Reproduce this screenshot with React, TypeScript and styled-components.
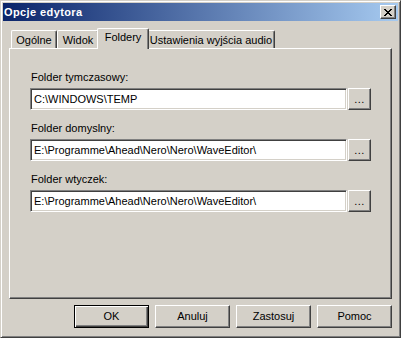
import { FC } from "react";
import styled, { createGlobalStyle } from "styled-components";

const GlobalStyle = createGlobalStyle`
  html, body {
    margin: 0;
    padding: 0;
    background: #d4d0c8;
  }
  * {
    box-sizing: border-box;
  }
`;

const Window = styled.div`
  width: 401px;
  height: 338px;
  display: flex;
  flex-direction: column;
  background: #d4d0c8;
  border: 1px solid;
  border-color: #d4d0c8 #404040 #404040 #d4d0c8;
  box-shadow: inset 1px 1px #ffffff, inset -1px -1px #808080;
  padding: 2px;
  font-family: "Liberation Sans", Arial, sans-serif;
  font-size: 11px;
  color: #000;
`;

const TitleBar = styled.div`
  height: 18px;
  display: flex;
  align-items: center;
  justify-content: space-between;
  padding: 0 2px 0 1px;
  background: linear-gradient(to right, #0a246a, #a6caf0);
`;

const Title = styled.span`
  color: #fff;
  font-weight: bold;
  font-size: 11px;
  letter-spacing: 0.4px;
`;

const CloseButton = styled.div`
  width: 16px;
  height: 14px;
  display: flex;
  align-items: center;
  justify-content: center;
  background: #d4d0c8;
  border: 1px solid;
  border-color: #ffffff #404040 #404040 #ffffff;
  box-shadow: inset -1px -1px #808080;
  padding-right: 1px;
`;

const Body = styled.div`
  flex: 1;
  display: flex;
  flex-direction: column;
  padding: 7px 6px 0;
`;

const TabRow = styled.div`
  position: relative;
  z-index: 1;
  height: 20px;
  display: flex;
  align-items: flex-end;
  padding-left: 2px;
`;

const Tab = styled.div<{ $active?: boolean; $w: number }>`
  width: ${(p) => p.$w + (p.$active ? 4 : 0)}px;
  height: ${(p) => (p.$active ? 21 : 18)}px;
  margin: 0 ${(p) => (p.$active ? -2 : 0)}px ${(p) => (p.$active ? -1 : 0)}px;
  padding-top: ${(p) => (p.$active ? 0 : 1)}px;
  position: relative;
  z-index: ${(p) => (p.$active ? 2 : 0)};
  background: #d4d0c8;
  border-left: 1px solid #ffffff;
  border-top: 1px solid #ffffff;
  border-right: 1px solid #404040;
  box-shadow: inset -1px 0 #808080;
  border-top-left-radius: 2px;
  border-top-right-radius: 2px;
  line-height: 16px;
  text-align: center;
  white-space: nowrap;
`;

const Panel = styled.div`
  height: 251px;
  display: flex;
  flex-direction: column;
  gap: 12px;
  padding: 22px 0 0 20px;
  border: 1px solid;
  border-color: #ffffff #404040 #404040 #ffffff;
  box-shadow: inset -1px -1px #808080;
`;

const Field = styled.div`
  display: flex;
  flex-direction: column;
  gap: 4px;
`;

const Label = styled.label`
  line-height: 13px;
  padding-left: 1px;
`;

const InputRow = styled.div`
  display: flex;
  gap: 1px;
`;

const PathInput = styled.div`
  width: 317px;
  height: 22px;
  display: flex;
  align-items: center;
  padding: 0 2px 1px 3px;
  background: #fff;
  border: 1px solid;
  border-color: #808080 #ffffff #ffffff #808080;
  box-shadow: inset 1px 1px #404040, inset -1px -1px #d4d0c8;
  white-space: nowrap;
  overflow: hidden;
`;

const BrowseButton = styled.div`
  width: 23px;
  height: 22px;
  display: flex;
  align-items: center;
  justify-content: center;
  padding-bottom: 1px;
  background: #d4d0c8;
  border: 1px solid;
  border-color: #ffffff #404040 #404040 #ffffff;
  box-shadow: inset -1px -1px #808080;
  letter-spacing: 0.5px;
`;

const ButtonRow = styled.div`
  display: flex;
  justify-content: flex-end;
  gap: 6px;
  padding-top: 6px;
`;

const Button = styled.div<{ $default?: boolean }>`
  width: 75px;
  height: 23px;
  display: flex;
  align-items: center;
  justify-content: center;
  padding-bottom: 1px;
  background: #d4d0c8;
  border: 1px solid;
  border-color: ${(p) =>
    p.$default ? "#000" : "#ffffff #404040 #404040 #ffffff"};
  box-shadow: ${(p) =>
    p.$default
      ? "inset 1px 1px #ffffff, inset -1px -1px #404040, inset -2px -2px #808080"
      : "inset -1px -1px #808080"};
`;

const CloseGlyph: FC = () => (
  <svg width="8" height="7" viewBox="0 0 8 7" shapeRendering="crispEdges">
    <path
      fill="#000"
      d="M0 0h2v1H0zM6 0h2v1H6zM1 1h2v1H1zM5 1h2v1H5zM2 2h4v1H2zM3 3h2v1H3zM2 4h4v1H2zM1 5h2v1H1zM5 5h2v1H5zM0 6h2v1H0zM6 6h2v1H6z"
    />
  </svg>
);

const tabs = [
  { label: "Ogólne", w: 46 },
  { label: "Widok", w: 42 },
  { label: "Foldery", w: 48, active: true },
  { label: "Ustawienia wyjścia audio", w: 128 },
];

const folders = [
  { label: "Folder tymczasowy:", path: "C:\\WINDOWS\\TEMP" },
  { label: "Folder domyslny:", path: "E:\\Programme\\Ahead\\Nero\\Nero\\WaveEditor\\" },
  { label: "Folder wtyczek:", path: "E:\\Programme\\Ahead\\Nero\\Nero\\WaveEditor\\" },
];

const App: FC = () => {
  return (
    <>
      <GlobalStyle />
      <Window>
        <TitleBar>
          <Title>Opcje edytora</Title>
          <CloseButton>
            <CloseGlyph />
          </CloseButton>
        </TitleBar>
        <Body>
          <TabRow>
            {tabs.map((t) => (
              <Tab key={t.label} $w={t.w} $active={t.active}>
                {t.label}
              </Tab>
            ))}
          </TabRow>
          <Panel>
            {folders.map((f) => (
              <Field key={f.label}>
                <Label>{f.label}</Label>
                <InputRow>
                  <PathInput>{f.path}</PathInput>
                  <BrowseButton>...</BrowseButton>
                </InputRow>
              </Field>
            ))}
          </Panel>
          <ButtonRow>
            <Button $default>OK</Button>
            <Button>Anuluj</Button>
            <Button>Zastosuj</Button>
            <Button>Pomoc</Button>
          </ButtonRow>
        </Body>
      </Window>
    </>
  );
};

export default App;
